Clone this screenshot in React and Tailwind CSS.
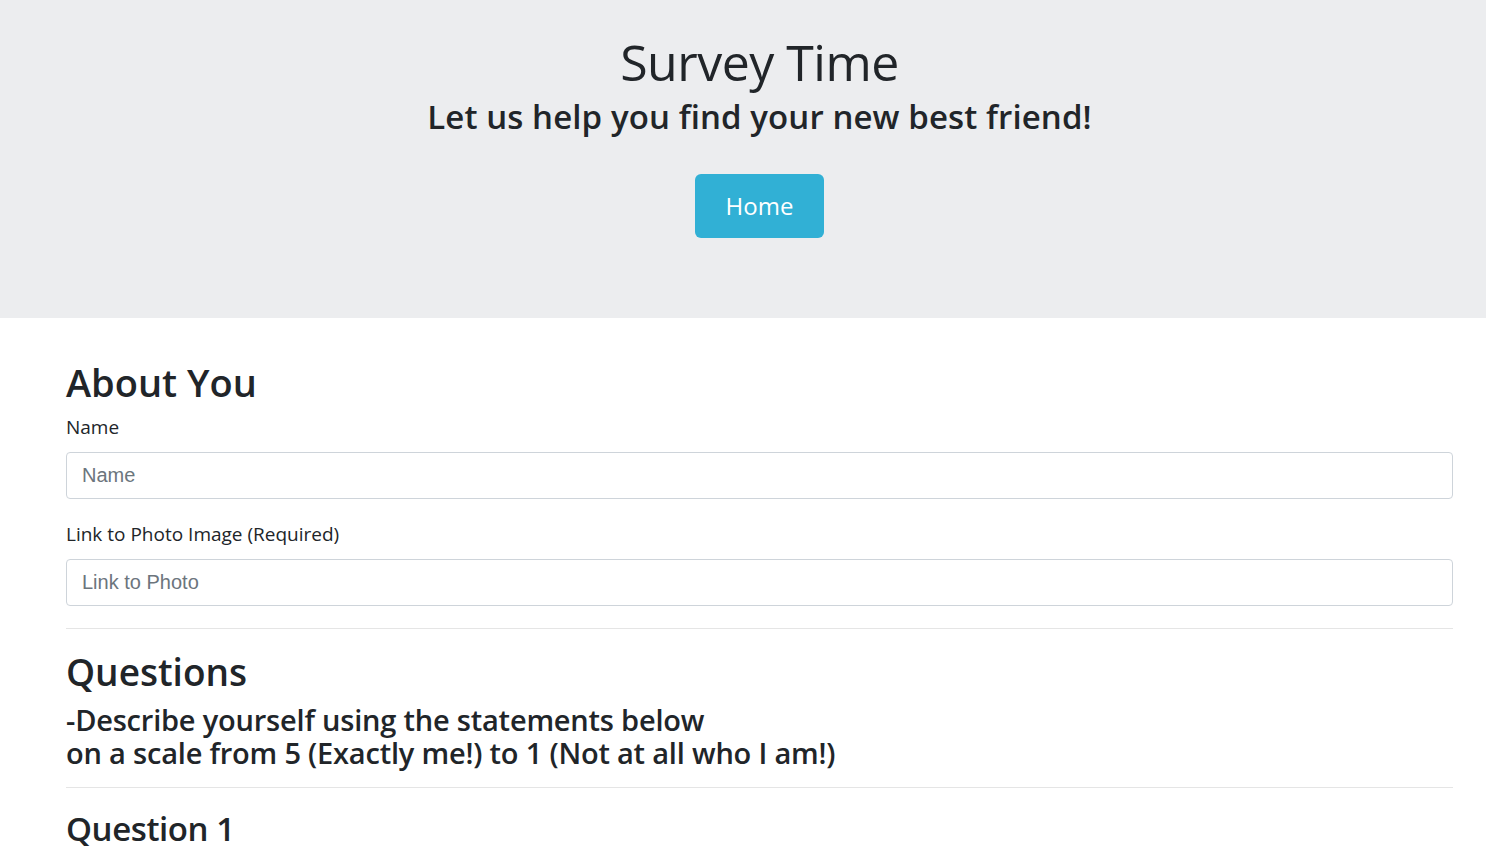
import React from 'react';

const Field = ({ label, placeholder }) => (
  <div className="flex flex-col">
    <label className="text-[19px] leading-[27px] text-[#212529]">{label}</label>
    <input
      type="text"
      placeholder={placeholder}
      className="mt-[11px] h-[47px] w-full rounded-[4px] border border-[#ced4da] bg-white px-[15px] font-['Liberation_Sans',Arial,sans-serif] text-[20px] text-[#495057] placeholder:text-[#6c757d] outline-none"
    />
  </div>
);

const App = () => {
  return (
    <div className="min-h-screen bg-white font-['Open_Sans','Noto_Sans',sans-serif] text-[#212529]">
      <header className="flex h-[318px] flex-col items-center bg-[#ecedef] pl-[33px] pt-[31px]">
        <h1 className="text-[50px] leading-[62px] tracking-[-0.5px]">Survey Time</h1>
        <h2 className="mt-[5px] text-[33px] font-semibold leading-[38px] tracking-[0.1px]">
          Let us help you find your new best friend!
        </h2>
        <button className="mt-[38px] h-[64px] w-[129px] rounded-[6px] bg-[#31b0d5] text-[24px] text-white">
          Home
        </button>
      </header>

      <main className="ml-[66px] mr-[33px] pt-[40px]">
        <h2 className="text-[38px] font-semibold leading-[48px]">About You</h2>
        <div className="mt-[8px] flex flex-col gap-[22px]">
          <Field label="Name" placeholder="Name" />
          <Field label="Link to Photo Image (Required)" placeholder="Link to Photo" />
        </div>

        <hr className="mt-[22px] border-t border-[#e5e5e5]" />

        <h2 className="mt-[19px] text-[37px] font-semibold leading-[48px]">Questions</h2>
        <h3 className="mt-[7px] text-[29px] font-semibold leading-[33px] tracking-[-0.2px]">
          <div>-Describe yourself using the statements below</div>
          <div>on a scale from 5 (Exactly me!) to 1 (Not at all who I am!)</div>
        </h3>

        <hr className="mt-[18px] border-t border-[#e5e5e5]" />

        <h3 className="mt-[19px] text-[33px] font-semibold leading-[43px] tracking-[-0.4px]">Question 1</h3>
      </main>
    </div>
  );
};

export default App;
